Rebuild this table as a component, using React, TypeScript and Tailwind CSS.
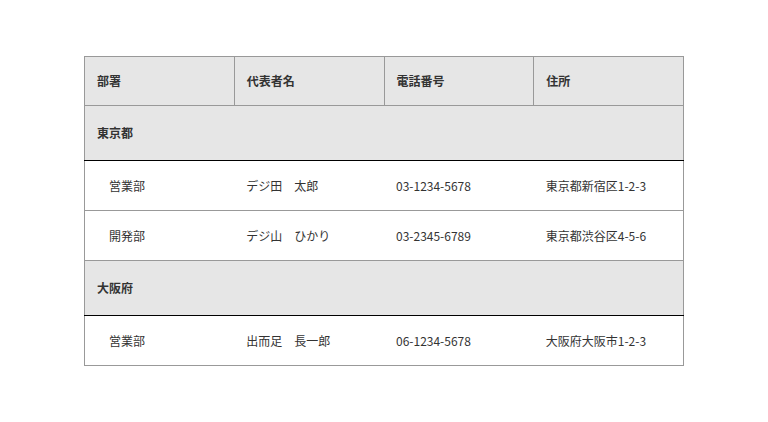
const headers = ['部署', '代表者名', '電話番号', '住所'];

const groups = [
  {
    name: '東京都',
    rows: [
      ['営業部', 'デジ田\u3000太郎', '03-1234-5678', '東京都新宿区1-2-3'],
      ['開発部', 'デジ山\u3000ひかり', '03-2345-6789', '東京都渋谷区4-5-6'],
    ],
  },
  {
    name: '大阪府',
    rows: [['営業部', '出而足\u3000長一郎', '06-1234-5678', '大阪府大阪市1-2-3']],
  },
];

export default function App() {
  return (
    <div
      className="w-[768px] h-[422px] bg-white pt-[56px] pl-[84px] text-[12px] text-[#333]"
      style={{ fontFamily: '"Noto Sans CJK JP", "Noto Sans", sans-serif' }}
    >
      <table className="w-[600px] table-fixed border-collapse border border-[#999]">
        <thead>
          <tr className="bg-[#e6e6e6]">
            {headers.map((h) => (
              <th key={h} className="h-[49px] border border-[#999] px-3 text-left font-bold">
                {h}
              </th>
            ))}
          </tr>
        </thead>
        <tbody>
          {groups.map((g) => (
            <>
              <tr key={g.name} className="bg-[#e6e6e6] border-b border-b-black">
                <th colSpan={4} className="h-[55px] px-3 text-left font-bold">
                  {g.name}
                </th>
              </tr>
              {g.rows.map((r) => (
                <tr key={r[0] + r[1]} className="border-b border-[#999]">
                  {r.map((c, i) => (
                    <td key={i} className={`h-[50px] pr-3 ${i === 0 ? 'pl-6' : 'pl-3'}`}>
                      {c}
                    </td>
                  ))}
                </tr>
              ))}
            </>
          ))}
        </tbody>
      </table>
    </div>
  );
}
